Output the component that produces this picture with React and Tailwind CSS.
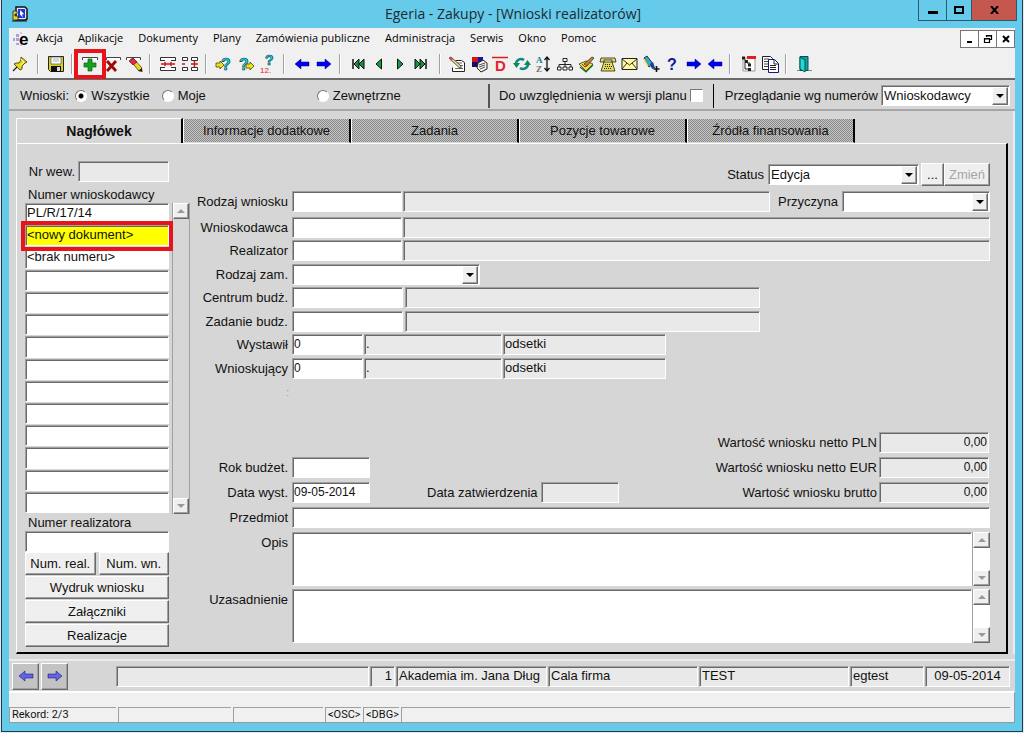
import React, { useState } from "react";

const sunken =
  "border border-t-[#a0a0a0] border-l-[#a0a0a0] border-b-white border-r-white shadow-[inset_1px_1px_0_#696969]";
const raised =
  "border border-t-white border-l-white border-b-[#696969] border-r-[#696969] shadow-[inset_-1px_-1px_0_#a0a0a0]";

const Field = ({ className = "", muted = false, ...props }) => (
  <input
    type="text"
    readOnly={muted}
    className={`h-[21px] min-w-0 rounded-none px-px pb-[2px] outline-none ${sunken} ${
      muted ? "bg-[#e9e9e9]" : "bg-white"
    } ${className}`}
    {...props}
  />
);

const Arrow = ({ up = false, color = "#000" }) => (
  <svg width="8" height="4" viewBox="0 0 8 4" fill={color}>
    <path d={up ? "M0 4h8L4 0z" : "M0 0h8L4 4z"} />
  </svg>
);

const Select = ({ className = "", options, ...props }) => (
  <div className={`relative h-[21px] bg-white ${sunken} ${className}`}>
    <select
      className="block h-full w-full appearance-none bg-transparent pr-5 pl-[2px] outline-none"
      {...props}
    >
      {options.map((o) => (
        <option key={o}>{o}</option>
      ))}
    </select>
    <span
      className={`pointer-events-none absolute top-px right-px bottom-0 flex w-4 items-center justify-center bg-[#f0f0f0] ${raised}`}
    >
      <Arrow />
    </span>
  </div>
);

const Button = ({ className = "", children, ...props }) => (
  <button
    type="button"
    className={`h-[23px] bg-[#efefef] ${raised} ${className}`}
    {...props}
  >
    {children}
  </button>
);

const Row = ({ label, id, children }) => (
  <div className="flex items-start">
    <label htmlFor={id} className="mr-1 w-[93px] shrink-0 pt-[3px] text-right whitespace-nowrap">
      {label}
    </label>
    {children}
  </div>
);

const ScrollBar = ({ className = "", label }) => (
  <div className={`flex w-[18px] shrink-0 flex-col justify-between border-l border-[#a0a0a0] ${className}`}>
    <button
      type="button"
      aria-label={`${label} w górę`}
      className={`flex h-4 items-center justify-center bg-[#efefef] ${raised}`}
    >
      <Arrow up color="#999" />
    </button>
    <button
      type="button"
      aria-label={`${label} w dół`}
      className={`flex h-4 items-center justify-center bg-[#efefef] ${raised}`}
    >
      <Arrow color="#999" />
    </button>
  </div>
);

const ArrowShape = ({ left = false, fill = "#0000f0" }) => (
  <path
    d={left ? "M2 9l6-5v3h8v4H8v3z" : "M16 9l-6-5v3H2v4h8v3z"}
    fill={fill}
    stroke="#000080"
    strokeWidth="0.5"
  />
);

const Question = ({ fill = "#18dce0", x = 4, y = 15, size = 16 }) => (
  <text
    x={x}
    y={y}
    fontFamily="Liberation Sans, sans-serif"
    fontWeight="bold"
    fontSize={size}
    fill={fill}
    stroke="#003c50"
    strokeWidth="0.6"
  >
    ?
  </text>
);

const icons = {
  pin: (
    <>
      <path d="M2 16l6-6" stroke="#222" strokeWidth="1.3" />
      <path d="M10 2l6 5-2 1-3 3v3l-2 1-6-6 2-1h3l2-3z" fill="#e8d820" stroke="#555010" />
      <path d="M10 4l3 3-4 4" fill="none" stroke="#fff890" />
    </>
  ),
  save: (
    <>
      <path d="M1.500 1.500h15v15h-13l-2-2z" fill="#d8d020" stroke="#222" />
      <path d="M4 2h10v7H4z" fill="#fff" stroke="#555" strokeWidth="0.7" />
      <path d="M6 4h6M6 6h6" stroke="#aaa" />
      <path d="M4 11h10v6H4z" fill="#111" />
      <path d="M10 12h3v4h-3z" fill="#ddd" />
    </>
  ),
  add: (
    <>
      <path d="M1.500 5V2.500h15V5" fill="#fff" stroke="#444" />
      <path d="M7 4h4v4h4v4h-4v4H7v-4H3V8h4z" fill="#18a020" stroke="#086010" strokeWidth="0.7" />
    </>
  ),
  remove: (
    <>
      <path d="M3.500 5V2.500h14V5" fill="#fff" stroke="#444" />
      <path d="M4 6l9 10M13 6L4 16" stroke="#a00808" strokeWidth="2.800" />
    </>
  ),
  erase: (
    <>
      <path d="M1.500 5V2.500h14V5" fill="#fff" stroke="#444" />
      <path d="M5 5l3-2 9 10-3 3z" fill="#e8d820" stroke="#554010" strokeWidth="0.8" />
      <path d="M4 6l4-3 4 4-4 3z" fill="#e02848" stroke="#701020" strokeWidth="0.7" />
      <path d="M13 16l4-3 .5 4z" fill="#302000" />
    </>
  ),
  join: (
    <>
      <path d="M1.500 5V2.500h15V5M1.500 13v2.500h15V13" fill="#fff" stroke="#333" />
      <path d="M1 5.500h5M12 5.500h5M1 12.500h5M12 12.500h5" stroke="#333" />
      <path d="M2 9h14M6 7v4M12 7v4" stroke="#d01818" strokeWidth="1.500" />
    </>
  ),
  split: (
    <>
      <path
        d="M1.500 2.500h5v3h-5zM10.500 2.500h6v3h-6zM1.500 12.500h5v3h-5zM10.500 12.500h6v3h-6z"
        fill="#fff"
        stroke="#333"
      />
      <path d="M1 9h3M10 9h7M13.500 6v6" stroke="#d01818" strokeWidth="1.500" />
    </>
  ),
  enterQuery: (
    <>
      <Question x={6} />
      <path d="M1 8h4V6l4 4-4 4v-2H1z" fill="#f0e020" stroke="#504800" strokeWidth="0.8" />
    </>
  ),
  runQuery: (
    <>
      <Question x={2} />
      <path d="M9 9h4V7l4 4-4 4v-2H9z" fill="#f0e020" stroke="#504800" strokeWidth="0.8" />
    </>
  ),
  countQuery: (
    <>
      <Question x={6} y={10} size={14} />
      <text x="1" y="18" fontFamily="Liberation Sans, sans-serif" fontSize="8" fill="#e01818">
        12.
      </text>
    </>
  ),
  left: <ArrowShape left />,
  right: <ArrowShape />,
  first: (
    <>
      <path d="M4 4v10" stroke="#111" strokeWidth="1.500" />
      <path d="M10 4v10L5 9zM15 4v10l-5-5z" fill="#109040" stroke="#111" />
    </>
  ),
  prev: <path d="M11.500 4v10L6 9z" fill="#10a048" stroke="#111" />,
  next: <path d="M6.500 4v10L12 9z" fill="#10a048" stroke="#111" />,
  last: (
    <>
      <path d="M14 4v10" stroke="#111" strokeWidth="1.500" />
      <path d="M8 4v10l5-5zM3 4v10l5-5z" fill="#109040" stroke="#111" />
    </>
  ),
  note: (
    <>
      <path d="M7.500 5.500h6l3 2v9h-12v-4" fill="#fff" stroke="#222" />
      <path d="M9 8h5M10 10.500h5M7 13.500h8" stroke="#666" />
      <path d="M1 3l2-1 10 9v2l-2-.500z" fill="#e8d890" stroke="#333" strokeWidth="0.8" />
      <path d="M1 3l2-1 2 2-2 2z" fill="#c05060" />
    </>
  ),
  gallery: (
    <>
      <path d="M2 2h6v5H2z" fill="#d01818" />
      <path d="M8 2h5v5H8z" fill="#1818a0" />
      <path d="M2 7h6v5H2z" fill="#101060" />
      <path d="M8 8l5-3 4 3v6l-6 3-4-4z" fill="#eee" stroke="#222" />
      <path d="M9 10l6-2M9 12l6-2M10 14l5-2" stroke="#555" />
    </>
  ),
  letterD: (
    <>
      <path d="M1 2.500h16" stroke="#e01818" strokeWidth="1.500" />
      <text x="4" y="16" fontFamily="Liberation Sans, sans-serif" fontWeight="bold" fontSize="15" fill="#e8202c">
        D
      </text>
    </>
  ),
  refresh: (
    <>
      <path d="M3 9a5 5 0 0 1 8-4" fill="none" stroke="#108888" strokeWidth="2.500" />
      <path d="M15 9a5 5 0 0 1-8 4" fill="none" stroke="#108888" strokeWidth="2.500" />
      <path d="M0 8h7l-3.500 5zM11 10h7l-3.500-5z" fill="#108858" />
    </>
  ),
  sort: (
    <>
      <text x="2" y="8" fontFamily="Liberation Serif, serif" fontWeight="bold" fontSize="9" fill="#108080">
        A
      </text>
      <text x="2" y="17" fontFamily="Liberation Serif, serif" fontWeight="bold" fontSize="9" fill="#707070">
        Z
      </text>
      <path d="M13 3v12M10.500 5L13 2l2.500 3M10.500 13l2.500 3 2.500-3" fill="none" stroke="#111" strokeWidth="1.300" />
    </>
  ),
  tree: (
    <>
      <path d="M9 6v3M3 12V9.500h12V12M9 9v3" fill="none" stroke="#222" />
      <path d="M7 3.500h4v3H7zM1.500 12h3.500v3H1.500zM7 12h4v3H7zM13 12h3.500v3H13z" fill="#fff" stroke="#222" />
    </>
  ),
  book: (
    <>
      <path d="M2 9l7-3 7 3-7 7z" fill="#e8e040" stroke="#333" strokeWidth="0.8" />
      <path d="M3 12l6 5 7-7" fill="none" stroke="#207030" strokeWidth="1.200" />
      <path d="M7 9l8-7 2 1-7 8z" fill="#c88030" stroke="#333" strokeWidth="0.8" />
      <path d="M5 9l3 3 3-2" fill="none" stroke="#c02020" />
    </>
  ),
  phone: (
    <>
      <path d="M2 3h14l1 4h-4V5H5v2H1z" fill="#e8dc50" stroke="#222" strokeWidth="0.8" />
      <path d="M5 7h8l3 9H2z" fill="#e8dc50" stroke="#222" strokeWidth="0.8" />
      <path d="M6 9.500h6M6 11.500h7M5 13.500h8" stroke="#222" strokeDasharray="1 1" />
    </>
  ),
  mail: (
    <>
      <path d="M2 3.500h15v11H2z" fill="#fff8a0" stroke="#222" />
      <path d="M2 4l7.500 6L17 4M2 14l5-6M17 14l-5-6" fill="none" stroke="#333" />
    </>
  ),
  torch: (
    <>
      <path d="M2 3l3-2 6 8-4 3z" fill="#30a8d8" stroke="#203040" />
      <path d="M8 9l3-2 2 6-3 1z" fill="#204090" />
      <path d="M2 4l4 7" stroke="#f0e020" strokeWidth="1.500" />
      <path d="M14.500 11v6M11.500 14h6" stroke="#111" strokeWidth="1.600" />
    </>
  ),
  help: (
    <text x="4" y="15" fontFamily="Liberation Sans, sans-serif" fontWeight="bold" fontSize="16" fill="#101890">
      ?
    </text>
  ),
  hierarchy: (
    <>
      <path d="M4 3h12v13H4z" fill="#fff" stroke="#999" />
      <path d="M8 1h9v3H8z" fill="#e02020" />
      <path d="M3 1.500h3v3H3zM6 5h3v3H6zM9 8.500h3v3H9zM9 13h3v3H9z" fill="#222" />
      <path d="M6 4v10h3M8 8h3" fill="none" stroke="#222" />
    </>
  ),
  copy: (
    <>
      <path d="M1.500 1.500h8l2 2v11h-10z" fill="#fff" stroke="#222" />
      <path d="M3 4h5M3 6.500h5M3 9h5M3 11.500h5" stroke="#444" />
      <path d="M7.500 4.500h6l4 4v9h-10z" fill="#fff" stroke="#101880" />
      <path d="M13 5v4h4M9 10.500h6M9 12.500h6M9 14.500h6" fill="none" stroke="#222" />
    </>
  ),
  door: (
    <>
      <path d="M2 15.500h15" stroke="#888" />
      <path d="M5 1.500h8v14H5z" fill="#10a0a0" stroke="#085050" />
      <path d="M5 2l5 3v12l-5-3z" fill="#20d8d8" stroke="#085050" />
    </>
  ),
};

const toolGroups = [
  { items: ["pin"], className: "pr-[2px]" },
  { items: ["save"] },
  { items: ["add", "remove", "erase"] },
  { items: ["join", "split"] },
  { items: ["enterQuery", "runQuery", "countQuery"] },
  { items: ["left", "right"] },
  { items: ["first", "prev", "next", "last"], className: "pr-1", size: "w-[21px]" },
  {
    items: [
      "note", "gallery", "letterD", "refresh", "sort", "tree", "book",
      "phone", "mail", "torch", "help", "right", "left",
    ],
    className: "w-[278px] justify-between",
    size: "w-5",
  },
  { items: ["hierarchy", "copy"] },
  { items: ["door"] },
];

const Toolbar = () => (
  <div className="flex h-[30px] items-center border-b-2 border-[#696969] bg-[#f0f0f0]">
    {toolGroups.map(({ items, className = "", size = "w-[22px]" }, i) => (
      <React.Fragment key={i}>
        {i > 0 && <span className="mr-[6px] ml-1 h-5 w-[2px] border-l border-[#a0a0a0] bg-white" />}
        <div className={`flex ${className}`}>
          {items.map((name) => (
            <button
              key={name}
              type="button"
              aria-label={name}
              className={`relative flex h-6 shrink-0 items-center justify-center ${size}`}
            >
              <svg width="18" height="18" viewBox="0 0 18 18" fill="none" className="overflow-visible">
                {icons[name]}
              </svg>
              {name === "add" && (
                <span className="absolute -top-[3px] -left-[5px] h-[30px] w-8 border-4 border-[#e8141c]" />
              )}
            </button>
          ))}
        </div>
      </React.Fragment>
    ))}
  </div>
);

const TitleBar = () => (
  <header className="relative flex h-7 items-start">
    <svg className="mt-[6px] ml-[10px]" width="16" height="16" viewBox="0 0 16 16">
      <path d="M4 1h9l2 2v10l-2 1H4z" fill="#e8e8ff" stroke="#111" strokeWidth="1.5" />
      <path d="M6 3h7v9H6z" fill="#2038d8" />
      <path d="M8 4l4 4-2 .5 1 3-3-3z" fill="#fff" />
      <path d="M1 5h4v3H3v2h3v4H1z" fill="#e8d820" stroke="#222" strokeWidth="0.8" />
      <path d="M0 15h15" stroke="#111" />
    </svg>
    <h1 className="flex-1 pt-1 pr-6 text-center font-['Open_Sans',sans-serif] text-[14px] leading-5 text-[#1c2a33]">
      Egeria - Zakupy - [Wnioski realizatorów]
    </h1>
    <div className="absolute right-[5px] flex h-[21px] border border-t-0 border-[#2c5a6c]">
      <button type="button" aria-label="Minimalizuj" className="flex w-[27px] items-center justify-center pt-1">
        <span className="h-[3px] w-[10px] bg-black" />
      </button>
      <button
        type="button"
        aria-label="Maksymalizuj"
        className="flex w-[26px] items-center justify-center border-x border-[#2c5a6c]"
      >
        <span className="h-2 w-[10px] border-2 border-black" />
      </button>
      <button type="button" aria-label="Zamknij" className="flex w-11 items-center justify-center bg-[#c4584f]">
        <svg width="9" height="8" viewBox="0 0 9 8">
          <path d="M1 0l7 8M8 0L1 8" stroke="#000" strokeWidth="2" />
        </svg>
      </button>
    </div>
  </header>
);

const menu = [
  "Akcja", "Aplikacje", "Dokumenty", "Plany", "Zamówienia publiczne",
  "Administracja", "Serwis", "Okno", "Pomoc",
];

const MenuBar = () => (
  <nav className="flex h-[22px] items-start bg-[#f0f0f0] font-['Open_Sans',sans-serif] text-[11px] leading-5 text-black">
    <svg className="mt-[2px] ml-[3px] shrink-0" width="18" height="18" viewBox="0 0 18 18">
      <path d="M1 8h2v3H1zM4 4h3v3H4zM4 8h3v3H4zM4 13h3v2H4z" fill="#a8a0e0" />
      <path d="M8 2h2v2H8zM8 14h2v2H8z" fill="#c8c4ee" />
      <text x="7" y="15" fontFamily="Liberation Sans, sans-serif" fontWeight="bold" fontSize="17" fill="#000">
        e
      </text>
    </svg>
    <ul className="flex flex-1 gap-[15px] pl-[6px]">
      {menu.map((item) => (
        <li key={item}>
          <button type="button" className="whitespace-nowrap">
            {item}
          </button>
        </li>
      ))}
    </ul>
    <div className="mt-[2px] flex">
      {["Minimalizuj okno", "Przywróć okno", "Zamknij okno"].map((label, i) => (
        <button
          key={label}
          type="button"
          aria-label={label}
          className="-ml-px flex h-[18px] w-[19px] items-center justify-center border border-[#777] bg-white"
        >
          <svg width="10" height="10" viewBox="0 0 10 10" fill="none" stroke="#000">
            {i === 0 && <path d="M2 8h5" strokeWidth="2" />}
            {i === 1 && <path d="M3.500 3V1.500h5v4H7M1.500 4.500h5v4h-5zM1 5h6M3 2h6" strokeWidth="1.200" />}
            {i === 2 && <path d="M2 2l6 6M8 2L2 8" strokeWidth="2" />}
          </svg>
        </button>
      ))}
    </div>
  </nav>
);

const Radio = ({ label, className = "", ...props }) => (
  <label className={`flex items-center gap-1 ${className}`}>
    <input
      type="radio"
      name="zakres"
      className="h-3 w-3 appearance-none rounded-full border border-t-[#777] border-r-white border-b-white border-l-[#777] bg-white bg-center checked:bg-[radial-gradient(circle,#000_2px,#fff_3px)]"
      {...props}
    />
    {label}
  </label>
);

const FilterBar = () => {
  const [scope, setScope] = useState("Wszystkie");
  const radio = (label, className) => (
    <Radio
      label={label}
      className={className}
      checked={scope === label}
      onChange={() => setScope(label)}
    />
  );

  return (
    <div className="flex h-[31px] items-center border-b-2 border-[#a6a6a6] pt-[2px] pr-[5px] pl-[11px] whitespace-nowrap">
      <span>Wnioski:</span>
      {radio("Wszystkie", "ml-[6px]")}
      {radio("Moje", "ml-3")}
      {radio("Zewnętrzne", "ml-[111px]")}
      <div className="ml-auto flex items-center">
        <span className="h-6 w-[2px] bg-[#555]" />
        <label className="ml-[9px] flex items-center gap-[3px]">
          Do uwzględnienia w wersji planu
          <input
            type="checkbox"
            className="h-[13px] w-[13px] appearance-none border border-t-[#777] border-r-white border-b-white border-l-[#777] bg-white"
          />
        </label>
        <span className="ml-[10px] h-6 w-px bg-black" />
        <label htmlFor="przegladanie" className="mr-[3px] ml-[11px]">
          Przeglądanie wg numerów
        </label>
        <Select id="przegladanie" options={["Wnioskodawcy", "Realizatora"]} className="w-[129px]" />
      </div>
    </div>
  );
};

const tabs = ["Nagłówek", "Informacje dodatkowe", "Zadania", "Pozycje towarowe", "Źródła finansowania"];

const Tabs = () => (
  <div role="tablist" className="flex h-[25px] items-end">
    {tabs.map((tab, i) =>
      i === 0 ? (
        <button
          key={tab}
          type="button"
          role="tab"
          aria-selected="true"
          className="h-[25px] w-[167px] border-t border-r-2 border-l border-t-white border-r-black border-l-white text-[14px] font-bold"
        >
          {tab}
        </button>
      ) : (
        <button
          key={tab}
          type="button"
          role="tab"
          aria-selected="false"
          className="h-6 w-[168px] border-r-2 border-b border-l border-r-black border-b-[#d6d6d6] border-l-white bg-[repeating-conic-gradient(#868686_0_25%,#c8c8c8_0_50%)] bg-[length:2px_2px]"
        >
          {tab}
        </button>
      )
    )}
  </div>
);

const documents = ["PL/R/17/14", "<nowy dokument>", "<brak numeru>", ...Array(11).fill("")];

const Sidebar = () => (
  <aside className="w-[165px] shrink-0 pt-[17px]">
    <div className="flex items-center justify-end pr-[21px]">
      <label htmlFor="nr-wew" className="mr-[3px]">
        Nr wew.
      </label>
      <Field id="nr-wew" muted className="w-[91px]" />
    </div>
    <h2 className="mt-1 pl-[3px] leading-[17px]">Numer wnioskodawcy</h2>
    <div className="flex justify-between">
      <ul className="flex h-[311px] w-36 flex-col">
        {documents.map((doc, i) => (
          <li key={i} className="relative flex flex-1 pb-px">
            <input
              type="text"
              aria-label={`Dokument ${i + 1}`}
              defaultValue={doc}
              className={`w-full px-px pb-[2px] outline-none ${sunken} ${i === 1 ? "bg-[#ffff00]" : "bg-white"}`}
            />
            {i === 1 && (
              <span className="pointer-events-none absolute -inset-x-1 -top-1 -bottom-1 z-10 border-4 border-[#e8141c]" />
            )}
          </li>
        ))}
      </ul>
      <ScrollBar label="Lista" className="border-r" />
    </div>
    <div className="w-36">
      <label htmlFor="nr-real" className="block pl-[3px] leading-[17px]">
        Numer realizatora
      </label>
      <Field id="nr-real" className="block w-full" />
      <div className="flex flex-col gap-px">
        <div className="flex gap-[3px]">
          <Button className="flex-1">Num. real.</Button>
          <Button className="flex-1">Num. wn.</Button>
        </div>
        <Button>Wydruk wniosku</Button>
        <Button>Załączniki</Button>
        <Button>Realizacje</Button>
      </div>
    </div>
  </aside>
);

const Amount = ({ label, id }) => (
  <div className="ml-auto flex items-center pr-px">
    <label htmlFor={id} className="mr-[2px] whitespace-nowrap">
      {label}
    </label>
    <Field id={id} muted defaultValue="0,00" className="w-[110px] text-right text-[12px]" />
  </div>
);

const TextBlock = ({ label, id }) => (
  <Row label={label} id={id}>
    <textarea id={id} className={`h-[54px] flex-1 resize-none bg-white outline-none ${sunken}`} />
    <ScrollBar label={label} className="h-[54px] bg-white" />
  </Row>
);

const HeaderForm = () => (
  <form className="flex min-w-0 flex-1 flex-col pt-[19px]">
    <div className="flex items-center justify-end">
      <label htmlFor="status" className="mr-1">
        Status
      </label>
      <Select id="status" options={["Edycja", "Zatwierdzony"]} className="w-[151px]" />
      <Button className="ml-[2px] w-[23px]">...</Button>
      <Button disabled className="w-[46px] text-[#a6a6a6]">
        Zmień
      </Button>
    </div>

    <div className="mt-[5px] flex flex-col gap-[5px]">
      <Row label="Rodzaj wniosku" id="rodzaj">
        <Field id="rodzaj" className="w-[110px]" />
        <Field muted aria-label="Nazwa rodzaju" className="ml-px flex-1" />
        <label htmlFor="przyczyna" className="mr-1 ml-2 pt-[3px]">
          Przyczyna
        </label>
        <Select id="przyczyna" options={[""]} className="w-[148px]" />
      </Row>
      <div className="flex flex-col gap-[3px]">
        <div className="flex flex-col gap-[2px]">
          <Row label="Wnioskodawca" id="wnioskodawca">
            <Field id="wnioskodawca" className="w-[110px]" />
            <Field muted aria-label="Nazwa wnioskodawcy" className="ml-px flex-1" />
          </Row>
          <Row label="Realizator" id="realizator">
            <Field id="realizator" className="w-[110px]" />
            <Field muted aria-label="Nazwa realizatora" className="ml-px flex-1" />
          </Row>
        </div>
        <div className="flex flex-col gap-[2px]">
          <Row label="Rodzaj zam." id="rodzaj-zam">
            <Select id="rodzaj-zam" options={[""]} className="w-[188px]" />
          </Row>
          <Row label="Centrum budż." id="centrum">
            <Field id="centrum" className="w-[111px]" />
            <Field muted aria-label="Nazwa centrum" className="ml-[2px] w-[355px]" />
          </Row>
        </div>
        <div className="flex flex-col gap-[2px]">
          <Row label="Zadanie budz." id="zadanie">
            <Field id="zadanie" className="w-[111px]" />
            <Field muted aria-label="Nazwa zadania" className="ml-[2px] w-[355px]" />
          </Row>
          <Row label="Wystawił" id="wystawil">
            <Field id="wystawil" defaultValue="0" className="w-[71px] text-[12px]" />
            <Field muted aria-label="Imię wystawiającego" defaultValue="." className="ml-px w-[138px]" />
            <Field muted aria-label="Nazwisko wystawiającego" defaultValue="odsetki" className="ml-px w-[163px]" />
          </Row>
        </div>
        <Row label="Wnioskujący" id="wnioskujacy">
          <Field id="wnioskujacy" defaultValue="0" className="w-[71px] text-[12px]" />
          <Field muted aria-label="Imię wnioskującego" defaultValue="." className="ml-px w-[138px]" />
          <Field muted aria-label="Nazwisko wnioskującego" defaultValue="odsetki" className="ml-px w-[163px]" />
        </Row>
      </div>
    </div>

    <div className="h-[53px] w-[94px] pt-[6px] text-right text-[10px] text-[#999]">:</div>

    <div className="flex flex-col gap-1">
      <div className="flex">
        <Amount label="Wartość wniosku netto PLN" id="netto-pln" />
      </div>
      <Row label="Rok budżet." id="rok">
        <Field id="rok" className="w-[78px]" />
        <Amount label="Wartość wniosku netto EUR" id="netto-eur" />
      </Row>
      <Row label="Data wyst." id="data-wyst">
        <Field id="data-wyst" defaultValue="09-05-2014" className="w-[78px] text-[12px]" />
        <label htmlFor="data-zatw" className="mr-[3px] ml-[57px] pt-[3px] whitespace-nowrap">
          Data zatwierdzenia
        </label>
        <Field id="data-zatw" muted className="w-[78px]" />
        <Amount label="Wartość wniosku brutto" id="brutto" />
      </Row>
      <Row label="Przedmiot" id="przedmiot">
        <Field id="przedmiot" className="flex-1" />
      </Row>
      <div className="flex flex-col gap-[3px]">
        <TextBlock label="Opis" id="opis" />
        <TextBlock label="Uzasadnienie" id="uzasadnienie" />
      </div>
    </div>
  </form>
);

const footerCells = [
  { text: "1", className: "w-[25px] text-right" },
  { text: "Akademia im. Jana Dług", className: "w-[151px]" },
  { text: "Cala firma", className: "w-[150px]" },
  { text: "TEST", className: "w-[150px]" },
  { text: "egtest", className: "w-[74px]" },
  { text: "09-05-2014", className: "w-[85px] text-center" },
];

const Footer = () => (
  <div className="mt-[5px] flex h-8 items-center border-t-2 border-[#ececec] pr-[5px] pl-[3px]">
    <div className="flex gap-[2px]">
      {[true, false].map((isLeft) => (
        <button
          key={String(isLeft)}
          type="button"
          aria-label={isLeft ? "Poprzedni" : "Następny"}
          className={`flex h-[27px] w-[27px] items-center justify-center bg-[#c3c3c3] ${raised}`}
        >
          <svg width="18" height="18" viewBox="0 0 18 18">
            <ArrowShape left={isLeft} fill="#6464e0" />
          </svg>
        </button>
      ))}
    </div>
    <div className="ml-12 flex min-w-0 flex-1 gap-px">
      <div className={`h-[21px] flex-1 bg-[#e9e9e9] ${sunken}`} />
      {footerCells.map(({ text, className }) => (
        <div
          key={text}
          className={`h-[21px] overflow-hidden bg-[#e9e9e9] px-[2px] leading-[18px] whitespace-nowrap ${sunken} ${className}`}
        >
          {text}
        </div>
      ))}
    </div>
  </div>
);

const statusCell = "h-[15px] border-t border-l border-[#a0a0a0] px-[2px] whitespace-nowrap";

const StatusBar = () => (
  <div className="border-t-2 border-r border-b border-t-white border-r-[#999] border-b-[#999] bg-[#f0f0f0] pt-[14px] pr-1">
    <div className="flex gap-[2px] font-[Roboto,sans-serif] text-[11px] leading-[14px]">
      <span className={`w-[107px] ${statusCell}`}>Rekord: 2/3</span>
      <span className={`w-[113px] ${statusCell}`} />
      <span className={`w-[90px] ${statusCell}`} />
      <span className={`w-9 ${statusCell}`}>&lt;OSC&gt;</span>
      <span className={`w-9 ${statusCell}`}>&lt;DBG&gt;</span>
      <span className={`flex-1 ${statusCell}`} />
    </div>
  </div>
);

const App = () => (
  <div className="min-h-screen bg-[#e8e8ee] pr-px pb-px pl-px font-['Liberation_Sans',Arial,sans-serif] text-[13px] leading-4 text-[#111]">
    <div className="flex min-h-[calc(100vh-1px)] flex-col border-x border-b border-[#1c3c50] bg-[#66cbea]">
      <TitleBar />
      <div className="mr-[7px] ml-[7px] flex flex-col bg-[#d6d6d6]">
        <MenuBar />
        <Toolbar />
        <FilterBar />
        <main className="border-r-2 border-[#ececec] pt-[7px] pr-[5px] pl-[7px]">
          <Tabs />
          <div className="flex gap-[5px] border-t border-r-2 border-b-2 border-l border-t-white border-r-black border-b-black border-l-white pr-4 pb-[5px] pl-2">
            <Sidebar />
            <HeaderForm />
          </div>
        </main>
        <Footer />
        <StatusBar />
      </div>
    </div>
  </div>
);

export default App;
